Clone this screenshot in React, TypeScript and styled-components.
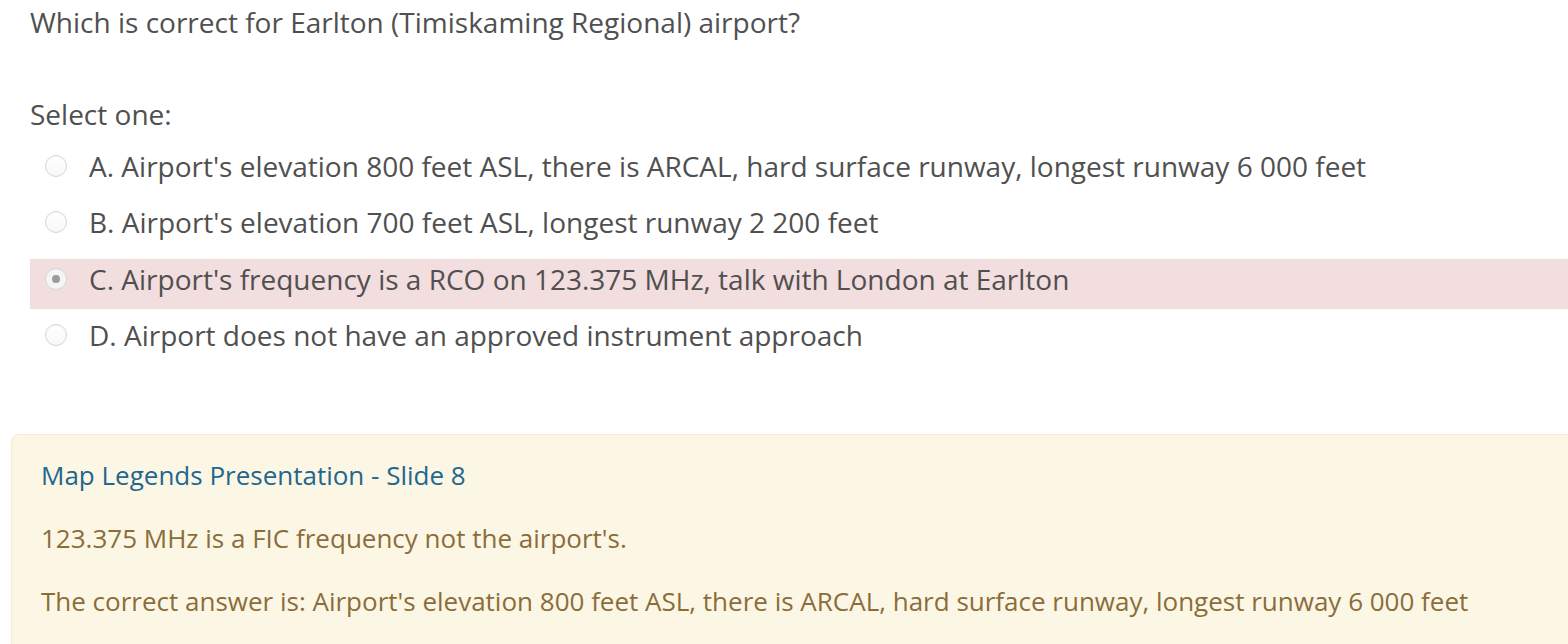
import styled, { createGlobalStyle } from 'styled-components'

const GlobalStyle = createGlobalStyle`
    html, body {
        margin: 0;
        padding: 0;
        background: #fff;
        overflow: hidden;
    }
    body {
        font-family: "Open Sans", "Liberation Sans", sans-serif;
        font-size: 28px;
        color: #505050;
    }
`

interface Option {
    letter: string;
    text: string;
    checked?: boolean;
}

const options: Option[] = [
    { letter: 'A', text: "Airport's elevation 800 feet ASL, there is ARCAL, hard surface runway, longest runway 6 000 feet" },
    { letter: 'B', text: "Airport's elevation 700 feet ASL, longest runway 2 200 feet" },
    { letter: 'C', text: "Airport's frequency is a RCO on 123.375 MHz, talk with London at Earlton", checked: true },
    { letter: 'D', text: "Airport does not have an approved instrument approach" },
]

function App() {
    return ( <>
    <GlobalStyle />
    <Page>
        <Formulation>
            <QText>Which is correct for Earlton (Timiskaming Regional) airport?</QText>
            <Prompt>Select one:</Prompt>
            <Answers>
                {options.map(o => (
                    <AnswerRow key={o.letter} $checked={o.checked}>
                        <Radio $checked={o.checked} />
                        <Label>{o.letter}. {o.text}</Label>
                    </AnswerRow>
                ))}
            </Answers>
        </Formulation>
        <Outcome>
            <FeedbackLine><Link href="#">Map Legends Presentation - Slide 8</Link></FeedbackLine>
            <FeedbackLine>123.375 MHz is a FIC frequency not the airport's.</FeedbackLine>
            <FeedbackLine>The correct answer is: Airport's elevation 800 feet ASL, there is ARCAL, hard surface runway, longest runway 6 000 feet</FeedbackLine>
        </Outcome>
    </Page>
    </> );
}

const Page = styled.div`
    width: 1620px;
    padding-left: 30px;
    box-sizing: border-box;
`

const Formulation = styled.div`
    display: flex;
    flex-direction: column;
`

const QText = styled.p`
    margin: 0;
    padding-top: 3px;
    line-height: 39px;
`

const Prompt = styled.p`
    margin: 53px 0 0;
    line-height: 39px;
`

const Answers = styled.div`
    display: flex;
    flex-direction: column;
    gap: 6.5px;
    margin-top: 12px;
`

const AnswerRow = styled.div<{ $checked?: boolean }>`
    display: flex;
    align-items: center;
    gap: 22px;
    height: 50px;
    padding: 0 0 11px 15px;
    box-sizing: border-box;
    background: ${p => p.$checked ? '#f2dddf' : 'transparent'};
`

const Radio = styled.span<{ $checked?: boolean }>`
    position: relative;
    width: 22px;
    height: 22px;
    flex: none;
    border-radius: 50%;
    box-sizing: border-box;
    border: 1px solid #d6d6d6;
    background: ${p => p.$checked
        ? 'radial-gradient(circle, #f0f0f0 0%, #fafafa 100%)'
        : 'linear-gradient(#ffffff, #f7f7f7)'};
    box-shadow: inset 0 1px 1px rgba(0,0,0,0.04);

    &::after {
        content: '';
        display: ${p => p.$checked ? 'block' : 'none'};
        position: absolute;
        left: 50%;
        top: 50%;
        width: 8px;
        height: 8px;
        margin: -4px 0 0 -4px;
        border-radius: 50%;
        background: #9b9b9b;
    }
`

const Label = styled.span`
    line-height: 42px;
    white-space: nowrap;
`

const Outcome = styled.div`
    margin: 68.5px 0 0 -19px;
    padding: 21px 29px 0;
    background: #fcf7e4;
    border: 1px solid #faebcc;
    border-right: none;
    border-radius: 8px 0 0 0;
    color: #8a6d3b;
    font-size: 26px;
    height: 240px;
`

const FeedbackLine = styled.p`
    margin: 0 0 24px;
    line-height: 39px;
    white-space: nowrap;
`

const Link = styled.a`
    color: #23668f;
    text-decoration: none;
`

export default App;
